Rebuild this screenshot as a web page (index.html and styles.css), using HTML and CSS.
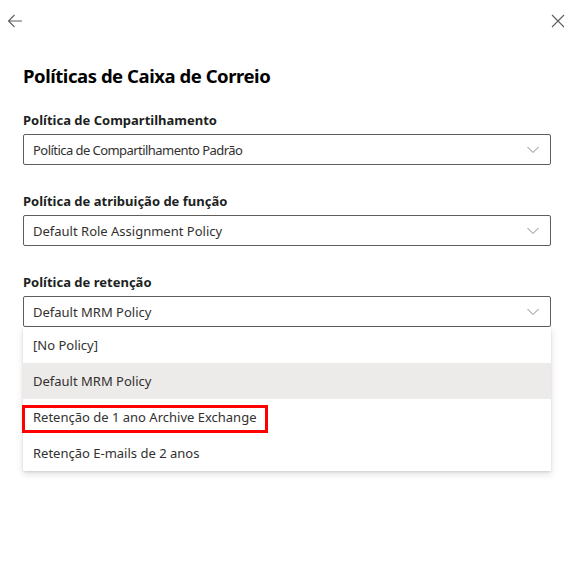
FILE: index.html
```html
<!DOCTYPE html>
<html lang="pt">
<head>
<meta charset="utf-8">
<link rel="stylesheet" href="styles.css">
</head>
<body>
<div class="panel">
  <div class="topbar">
    <button class="icon-btn back" aria-label="Voltar">
      <svg width="16" height="16" viewBox="0 0 16 16"><path d="M15 8H1.5M7.5 2L1.5 8l6 6" fill="none" stroke="#605e5c" stroke-width="1.1"/></svg>
    </button>
    <button class="icon-btn close" aria-label="Fechar">
      <svg width="14" height="14" viewBox="0 0 14 14"><path d="M1 1l12 12M13 1L1 13" fill="none" stroke="#605e5c" stroke-width="1.1"/></svg>
    </button>
  </div>
  <div class="content">
    <h1 class="title">Políticas de Caixa de Correio</h1>

    <div class="field">
      <div class="label">Política de Compartilhamento</div>
      <div class="dropdown">
        <span class="value tight">Política de Compartilhamento Padrão</span>
        <svg class="chev" width="12" height="8" viewBox="0 0 12 8"><path d="M0.5 1l5.5 5.5L11.5 1" fill="none" stroke="#8a8886" stroke-width="1"/></svg>
      </div>
    </div>

    <div class="field">
      <div class="label">Política de atribuição de função</div>
      <div class="dropdown">
        <span class="value">Default Role Assignment Policy</span>
        <svg class="chev" width="12" height="8" viewBox="0 0 12 8"><path d="M0.5 1l5.5 5.5L11.5 1" fill="none" stroke="#8a8886" stroke-width="1"/></svg>
      </div>
    </div>

    <div class="field">
      <div class="label">Política de retenção</div>
      <div class="dropdown open">
        <span class="value">Default MRM Policy</span>
        <svg class="chev" width="12" height="8" viewBox="0 0 12 8"><path d="M0.5 1l5.5 5.5L11.5 1" fill="none" stroke="#8a8886" stroke-width="1"/></svg>
      </div>
      <div class="listbox">
        <div class="option">[No Policy]</div>
        <div class="option selected">Default MRM Policy</div>
        <div class="option highlighted"><span class="mark"></span>Retenção de 1 ano Archive Exchange</div>
        <div class="option">Retenção E-mails de 2 anos</div>
      </div>
    </div>
  </div>
</div>
</body>
</html>
```

FILE: styles.css
```css
* { box-sizing: border-box; }
html, body {
  margin: 0;
  padding: 0;
  background: #ffffff;
  font-family: "Noto Sans", "Open Sans", sans-serif;
  color: #323130;
}
.panel {
  width: 574px;
  height: 561px;
  position: relative;
}
.topbar {
  height: 40px;
  display: flex;
  justify-content: space-between;
  align-items: center;
  padding: 0 7px 0 6px;
}
.icon-btn {
  background: none;
  border: 0;
  padding: 0;
  width: 18px;
  height: 18px;
  display: flex;
  align-items: center;
  justify-content: center;
  margin-top: 2px;
}
.content {
  padding: 0 23px;
}
.title {
  margin: 22px 0 0 0;
  font-size: 18.5px;
  font-weight: 700;
  color: #000;
  line-height: 28px;
  letter-spacing: -0.45px;
}
.field {
  display: flex;
  flex-direction: column;
  position: relative;
}
.field + .field { margin-top: 26px; }
.title + .field { margin-top: 20px; }
.label {
  font-size: 13px;
  font-weight: 700;
  color: #201f1e;
  line-height: 20px;
  margin-bottom: 4px;
}
.dropdown {
  height: 31px;
  border: 1px solid #605e5c;
  border-radius: 2px;
  display: flex;
  align-items: center;
  justify-content: space-between;
  padding: 0 11px 0 9px;
  font-size: 13px;
  color: #323130;
}
.value.tight { letter-spacing: -0.55px; }
.chev { margin-top: 1px; }
.listbox {
  position: absolute;
  top: 55px;
  left: 0;
  right: 0;
  background: #fff;
  box-shadow: 0 3px 7px rgba(0,0,0,0.13), 0 0.6px 2px rgba(0,0,0,0.1);
  display: flex;
  flex-direction: column;
}
.option {
  height: 36px;
  display: flex;
  align-items: center;
  padding: 0 10px;
  font-size: 13px;
  color: #323130;
  position: relative;
}
.option.selected { background: #edebe9; }
.mark {
  position: absolute;
  left: -1px;
  top: 6px;
  width: 246px;
  height: 28px;
  border: 3px solid #ff0000;
}
```
